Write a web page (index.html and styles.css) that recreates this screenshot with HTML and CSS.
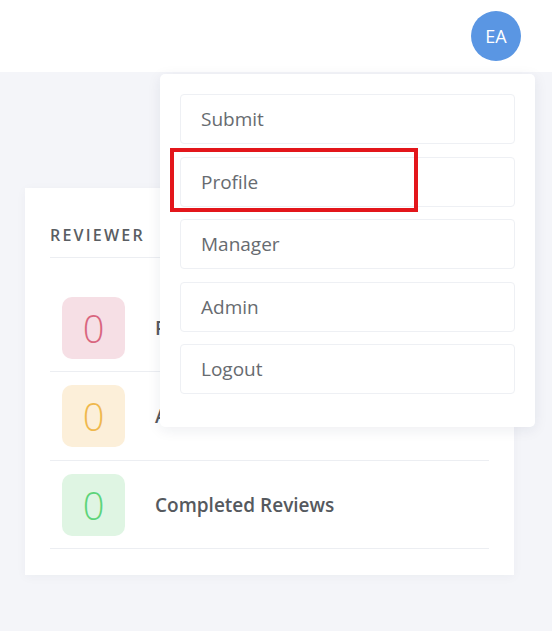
FILE: index.html
```html
<!DOCTYPE html>
<html lang="en">
<head>
    <meta charset="UTF-8">
    <meta name="viewport" content="width=device-width, initial-scale=1.0">
    <title>Reviewer Dashboard</title>
    <link rel="stylesheet" href="styles.css">
</head>
<body>
    <header class="topbar">
        <div class="avatar">EA</div>
    </header>

    <main class="content">
        <section class="card">
            <h4 class="card-title">REVIEWER</h4>
            <ul class="stats">
                <li class="stat">
                    <span class="badge badge-pending">0</span>
                    <span class="stat-label">Pending Reviews</span>
                </li>
                <li class="stat">
                    <span class="badge badge-assigned">0</span>
                    <span class="stat-label">Active Reviews</span>
                </li>
                <li class="stat">
                    <span class="badge badge-done">0</span>
                    <span class="stat-label">Completed Reviews</span>
                </li>
            </ul>
        </section>
    </main>

    <nav class="user-menu">
        <a class="menu-item" href="#">Submit</a>
        <a class="menu-item" href="#">Profile</a>
        <a class="menu-item" href="#">Manager</a>
        <a class="menu-item" href="#">Admin</a>
        <a class="menu-item" href="#">Logout</a>
    </nav>

    <div class="highlight"></div>
</body>
</html>
```

FILE: styles.css
```css
body { margin: 0; background-color: #f4f5f9; font-family: "Open Sans", Arial, sans-serif; color: #555a5f; }

.topbar { height: 72px; background-color: #fff; display: flex; justify-content: flex-end; align-items: center; padding-right: 31px; }
.avatar { width: 50px; height: 50px; border-radius: 50%; background-color: #5a96e3; color: #fff; font-size: 18px; display: flex; align-items: center; justify-content: center; }

.content { padding: 116px 38px 40px 25px; }
.card { width: 439px; background-color: #fff; padding: 37px 25px 26px; box-shadow: 0 2px 10px rgba(30, 40, 80, 0.04); }
.card-title { margin: 0 0 26px; padding-bottom: 12px; font-size: 16px; line-height: 20px; font-weight: 600; letter-spacing: 2.2px; color: #5a5e63; border-bottom: 1px solid #eceef2; }

.stats { list-style: none; margin: 0; padding: 0; }
.stat { display: flex; align-items: center; gap: 30px; padding: 13px 12px 12.5px; border-bottom: 1px solid #eceef2; }
.stat:first-child { padding-top: 12.5px; }
.badge { width: 63px; height: 62px; border-radius: 10px; display: flex; align-items: center; justify-content: center; font-size: 38px; font-weight: 300; }
.badge-pending { background-color: #f6dfe5; color: #d9667f; }
.badge-assigned { background-color: #fcefd9; color: #efb84d; }
.badge-done { background-color: #dff5e3; color: #5dd47a; }
.stat-label { font-size: 19px; font-weight: 600; color: #55595e; }

/* dropdown under the avatar */
.user-menu { position: absolute; top: 74px; left: 160px; width: 335px; padding: 20px 20px 33px; background-color: #fff; border-radius: 5px; box-shadow: 0 3px 14px rgba(30, 40, 80, 0.08); display: flex; flex-direction: column; gap: 12.5px; }
.menu-item { height: 48px; display: flex; align-items: center; padding-left: 20px; border: 1px solid #eef0f4; border-radius: 4px; color: #676b70; font-size: 19px; text-decoration: none; }

.highlight { position: absolute; top: 148px; left: 170px; width: 240px; height: 56px; border: 4px solid #e3161b; }
```
